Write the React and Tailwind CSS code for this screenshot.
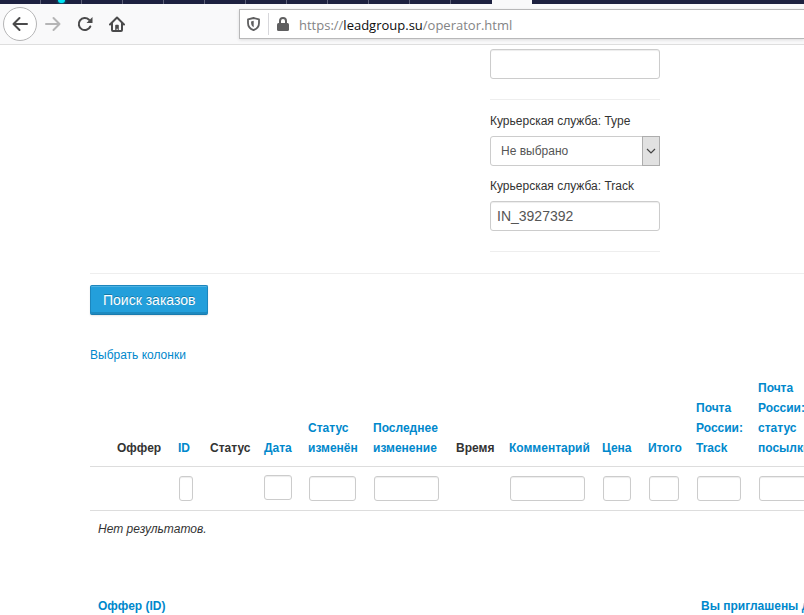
const tabs = [
  { id: 1 }, { id: 2, busy: true }, { id: 3 }, { id: 4 }, { id: 5 }, { id: 6 },
  { id: 7 }, { id: 8 }, { id: 9 }, { id: 10 }, { id: 11 }, { id: 12 },
];

const columns = [
  { width: 19 },
  { title: 'Оффер', width: 61 },
  { title: 'ID', width: 32, sortable: true },
  { title: 'Статус', width: 54 },
  { title: 'Дата', width: 44, sortable: true, date: true },
  { title: 'Статус изменён', width: 65, sortable: true },
  { title: 'Последнее изменение', width: 83, sortable: true },
  { title: 'Время', width: 53 },
  { title: 'Комментарий', width: 93, sortable: true },
  { title: 'Цена', width: 46, sortable: true },
  { title: 'Итого', width: 48, sortable: true },
  { title: 'Почта России: Track', width: 62, sortable: true },
  { title: 'Почта России: статус посылки', width: 66, sortable: true },
];

const tableWidth = columns.reduce((sum, column) => sum + column.width, 0);

const field = 'border border-[#ccc] bg-white text-[#555] shadow-[inset_0_1px_1px_rgba(0,0,0,0.075)]';

function TabStrip() {
  return (
    <div className="flex h-1 overflow-hidden bg-[#1d2140]">
      {tabs.map((tab) => (
        <div
          key={tab.id}
          className={
            tab.id === 12
              ? 'flex w-[41px] shrink-0 justify-center'
              : 'flex w-[41px] shrink-0 justify-center border-r border-[#5d6078]'
          }
        >
          {tab.busy && <span className="h-[3px] w-[7px] rounded-b-full bg-[#00e5f5] shadow-[0_0_3px_#00b8cc]" />}
        </div>
      ))}
      <div className="w-10 shrink-0 bg-[#f9f9fa]" />
    </div>
  );
}

function Toolbar() {
  return (
    <div className="flex h-[41px] items-center border-b border-[#dedede] bg-[#f9f9fa] pl-[3px]">
      <button
        type="button"
        aria-label="Назад"
        className="flex size-[34px] shrink-0 items-center justify-center rounded-full border border-[#b5b5b6] bg-white text-[#4a4a4b]"
      >
        <svg width="16" height="16" viewBox="0 0 16 16" fill="none" stroke="currentColor" strokeWidth="2" strokeLinecap="round" strokeLinejoin="round">
          <path d="M15 8H1.5M7.5 2l-6 6 6 6" />
        </svg>
      </button>
      <button type="button" aria-label="Вперёд" className="ml-2 shrink-0 text-[#b5b5b6]">
        <svg width="16" height="16" viewBox="0 0 16 16" fill="none" stroke="currentColor" strokeWidth="2" strokeLinecap="round" strokeLinejoin="round">
          <path d="M1 8h13.5M8.5 2l6 6-6 6" />
        </svg>
      </button>
      <button type="button" aria-label="Обновить" className="ml-4 shrink-0 text-[#4a4a4b]">
        <svg width="16" height="16" viewBox="0 0 16 16" fill="none" stroke="currentColor" strokeWidth="2" strokeLinecap="round">
          <path d="M13.3 10.5A6 6 0 1 1 12 3.8" />
          <path d="M15.5 1v6h-6z" fill="currentColor" stroke="none" />
        </svg>
      </button>
      <button type="button" aria-label="Домой" className="ml-4 shrink-0 text-[#4a4a4b]">
        <svg width="16" height="16" viewBox="0 0 16 16" fill="none" stroke="currentColor" strokeWidth="2" strokeLinecap="round" strokeLinejoin="round">
          <path d="M1 8.500L8 1.500l7 7" />
          <path d="M3 7.5V14a1 1 0 0 0 1 1h8a1 1 0 0 0 1-1V7.5" />
          <path d="M6.2 15V9.5a.8.8 0 0 1 .8-.8h2a.8.8 0 0 1 .8.8V15H8.700v-2.200H7.600V15z" fill="currentColor" stroke="none" />
        </svg>
      </button>
      <div className="ml-[114px] flex h-[30px] flex-1 items-center border border-r-0 border-[#b8b8b9] bg-white pl-[7px] shadow-[0_1px_3px_rgba(0,0,0,0.12)]">
        <svg className="shrink-0 text-[#5f5f60]" width="13" height="14" viewBox="0 0 13 14" fill="none" stroke="currentColor" strokeWidth="1.8" strokeLinejoin="round">
          <path d="M6.5 1L12 2.300v3.700c0 3.600-2 5.900-5.500 7.100C3 11.900 1 9.600 1 6V2.300z" />
          <path d="M6.7 3.8v6.4C5 9.3 4.1 7.9 4.1 6V4.4z" fill="currentColor" stroke="none" />
        </svg>
        <span className="mx-2 h-[22px] w-px bg-[#d7d7db]" />
        <svg className="shrink-0 text-[#5f5f60]" width="12" height="14" viewBox="0 0 12 14" fill="none">
          <path d="M3 7V4a3 3 0 0 1 6 0v3" stroke="currentColor" strokeWidth="2" />
          <rect y="6" width="12" height="8" rx="1.5" fill="currentColor" />
        </svg>
        <span className="ml-[10px] whitespace-nowrap pt-0.5 font-['Open_Sans',sans-serif] text-[13px] leading-5 text-[#848485]">
          https://<span className="text-[#0c0c0d]">leadgroup.su</span>/operator.html
        </span>
      </div>
    </div>
  );
}

function SearchForm() {
  return (
    <form>
      <div className="ml-[400px] w-[170px]">
        <input type="text" aria-label="Трек-номер" className={`${field} block h-[30px] w-full rounded-[3px] px-[6px] text-sm`} />
        <hr className="mt-5 border-[#eee]" />
        <label htmlFor="courier-type" className="mt-[11px] block leading-5">Курьерская служба: Type</label>
        <div className="relative mt-[5px]">
          <select id="courier-type" className="block h-[30px] w-full appearance-none rounded-[3px] border border-[#ccc] bg-white pl-[10px] text-[#555]">
            <option>Не выбрано</option>
          </select>
          <span className="pointer-events-none absolute inset-y-0 right-0 flex w-[18px] items-center justify-center border border-[#adadad] bg-[#e1e1e1]">
            <svg width="10" height="6" viewBox="0 0 10 6" fill="none" stroke="#444" strokeWidth="1.2">
              <path d="M1 1l4 4 4-4" />
            </svg>
          </span>
        </div>
        <label htmlFor="courier-track" className="mt-[10px] block leading-5">Курьерская служба: Track</label>
        <input
          id="courier-track"
          type="text"
          defaultValue="IN_3927392"
          className={`${field} mt-[5px] block h-[30px] w-full rounded-[3px] px-[6px] text-sm`}
        />
        <hr className="mt-5 border-[#eee]" />
      </div>
      <hr className="mt-[21px] border-[#eee]" />
      <button
        type="button"
        className="mt-[11px] block h-[30px] rounded-[2px] border border-[#1c86bd] border-b-[#1a7bae] bg-[#239fdb] px-3 text-sm text-white shadow-[inset_0_1px_0_rgba(255,255,255,0.2),inset_0_-2px_0_#1d8ac0,0_1px_2px_rgba(0,0,0,0.1)] text-shadow-[0_-1px_0_rgba(0,0,0,0.25)]"
      >
        Поиск заказов
      </button>
    </form>
  );
}

function OrdersTable() {
  return (
    <table className="mt-[5px] table-fixed border-collapse text-left" style={{ width: tableWidth }}>
      <colgroup>
        {columns.map((column, i) => (
          <col key={i} style={{ width: column.width }} />
        ))}
      </colgroup>
      <thead>
        <tr className="border-b border-[#ddd] align-bottom">
          {columns.map((column, i) => (
            <th key={i} className="p-2 font-bold leading-5">
              {column.sortable ? <a href="#sort" className="text-[#0088cc]">{column.title}</a> : column.title}
            </th>
          ))}
        </tr>
      </thead>
      <tbody>
        <tr className="border-b border-[#ddd] align-top">
          {columns.map((column, i) => (
            <td key={i} className="h-11 p-2">
              {column.sortable && (
                <div className={column.date ? '' : 'p-px'}>
                  <input type="text" aria-label={column.title} className={`${field} block h-[25px] w-full rounded-[3px]`} />
                </div>
              )}
            </td>
          ))}
        </tr>
        <tr>
          <td colSpan={columns.length} className="p-2 italic leading-5">Нет результатов.</td>
        </tr>
      </tbody>
    </table>
  );
}

function InvitesTable() {
  return (
    <table className="mt-[41px] w-[1200px] table-fixed border-collapse text-left text-[#0088cc]">
      <thead>
        <tr>
          <th className="w-[603px] px-2 pt-2 leading-5"><a href="#offer">Оффер (ID)</a></th>
          <th className="px-2 pt-2 leading-5"><a href="#invited">Вы приглашены для</a></th>
        </tr>
      </thead>
    </table>
  );
}

export default function App() {
  return (
    <div className="min-h-screen overflow-hidden bg-white font-['Liberation_Sans',Arial,sans-serif] text-xs text-[#333]">
      <TabStrip />
      <Toolbar />
      <main className="pl-[90px] pt-1">
        <SearchForm />
        <a href="#columns" className="mt-[30px] inline-block leading-5 text-[#0088cc]">Выбрать колонки</a>
        <OrdersTable />
        <InvitesTable />
      </main>
    </div>
  );
}
